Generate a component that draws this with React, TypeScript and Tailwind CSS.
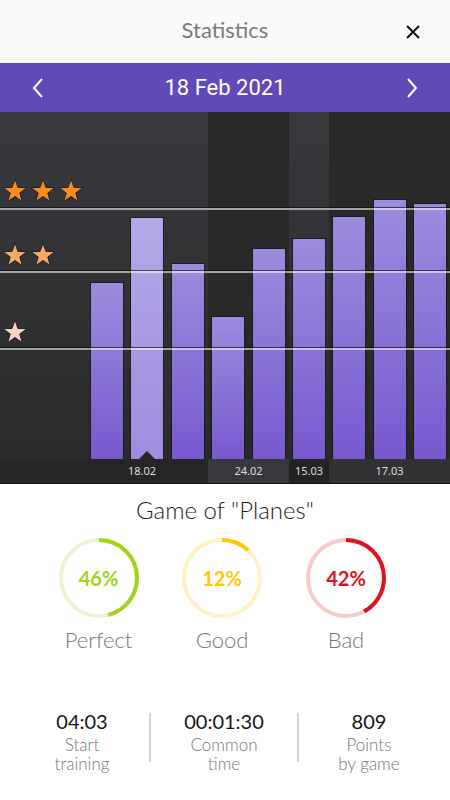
import React from 'react';

const bars = [177, 242, 196, 143, 211, 221, 243, 260, 256];
const selected = 1;

const bands = [
    { w: 208, light: true, strip: 'bg-[#252525]', label: '18.02', pad: 'pl-[128px]' },
    { w: 81, light: false, strip: 'bg-[#37383b]', label: '24.02', pad: 'justify-center' },
    { w: 40, light: true, strip: 'bg-[#242424]', label: '15.03', pad: 'justify-center' },
    { w: 121, light: false, strip: 'bg-[#323234]', label: '17.03', pad: 'justify-center' },
];

const Star = ({ fill }: { fill: string }) => (
    <svg width="26" height="25" viewBox="0 0 26 25">
        <polygon
            points="13,1 15.94,9.45 24.89,9.64 17.76,15.05 20.35,23.61 13,18.5 5.65,23.61 8.24,15.05 1.11,9.64 10.06,9.45"
            fill={fill}
            stroke="#1c232c"
            strokeWidth="1"
            strokeLinejoin="miter"
        />
    </svg>
);

const Ring = ({ pct, color, track }: { pct: number; color: string; track: string }) => {
    const c = 2 * Math.PI * 38;
    return (
        <svg width="80" height="80" viewBox="0 0 80 80" className="absolute inset-0">
            <circle cx="40" cy="40" r="38" fill="none" stroke={track} strokeWidth="4" />
            <circle
                cx="40"
                cy="40"
                r="38"
                fill="none"
                stroke={color}
                strokeWidth="4"
                strokeDasharray={`${(c * pct) / 100} ${c}`}
                transform="rotate(-90 40 40)"
            />
        </svg>
    );
};

const results = [
    { pct: 46, color: '#a2d41a', track: '#e9f4d0', text: 'text-[#a2d41a]', label: 'Perfect' },
    { pct: 12, color: '#ffc800', track: '#fff2c6', text: 'text-[#ffc800]', label: 'Good' },
    { pct: 42, color: '#dc1420', track: '#f6cbcb', text: 'text-[#dc1420]', label: 'Bad' },
];

const stats = [
    { value: '04:03', label: ['Start', 'training'] },
    { value: '00:01:30', label: ['Common', 'time'] },
    { value: '809', label: ['Points', 'by game'] },
];

export default function App() {
    return (
        <div className="w-[450px] h-[800px] bg-white overflow-hidden flex flex-col" style={{ fontFamily: 'Lato, "Open Sans", sans-serif' }}>
            <div className="h-[63px] bg-[#fafafa] flex items-center justify-center relative shrink-0">
                <span className="text-[22px] text-[#7a7a7a] -mt-[4px]">Statistics</span>
                <button className="absolute right-[30px] top-[25px] w-[14px] h-[14px]">
                    <svg width="14" height="14" viewBox="0 0 14 14">
                        <path d="M1 1 L13 13 M13 1 L1 13" stroke="#111" strokeWidth="2" />
                    </svg>
                </button>
            </div>

            <div className="h-[49px] bg-[#5f4ab8] flex items-center justify-between px-[32px] shrink-0">
                <svg width="12" height="20" viewBox="0 0 12 20">
                    <polyline points="10,1 2,10 10,19" fill="none" stroke="#fff" strokeWidth="2" />
                </svg>
                <span className="text-[22px] text-white" style={{ fontFamily: 'Roboto, "Liberation Sans", sans-serif' }}>
                    18 Feb 2021
                </span>
                <svg width="12" height="20" viewBox="0 0 12 20">
                    <polyline points="2,1 10,10 2,19" fill="none" stroke="#fff" strokeWidth="2" />
                </svg>
            </div>

            <div className="relative h-[372px] shrink-0 border-b border-[#111]">
                <div className="absolute inset-0 flex">
                    {bands.map((b, i) => (
                        <div key={i} className="flex flex-col h-full" style={{ width: b.w }}>
                            <div className={`flex-1 ${b.light ? 'bg-gradient-to-b from-[#38393d] to-[#2b2b2c]' : 'bg-[#292929]'}`} />
                            <div
                                className={`h-[24px] flex items-center ${b.strip} ${b.pad} text-[11px] text-[#dedede]`}
                                style={{ fontFamily: '"Noto Sans", sans-serif' }}
                            >
                                {b.label}
                            </div>
                        </div>
                    ))}
                </div>

                <div className="absolute left-0 right-0 top-0 h-[347px] flex items-end pl-[90px] gap-[6.4px]">
                    {bars.map((h, i) => (
                        <div
                            key={i}
                            className={`relative w-[34px] shrink-0 border border-[#1b1b1b] border-b-0 ${
                                i === selected
                                    ? 'bg-gradient-to-b from-[#b4a8e6] to-[#9f8cdf]'
                                    : 'bg-gradient-to-b from-[#9d8cdd] to-[#7858cf]'
                            }`}
                            style={{ height: h }}
                        >
                            {i === selected && (
                                <svg width="16" height="8" viewBox="0 0 16 8" className="absolute bottom-0 left-[8px]">
                                    <polygon points="0,8 8,0 16,8" fill="#262626" />
                                </svg>
                            )}
                        </div>
                    ))}
                </div>

                {[95, 158, 235].map((t) => (
                    <div key={t} className="absolute left-0 right-0" style={{ top: t }}>
                        <div className="h-[1px] bg-black/60" />
                        <div className="h-[1.5px] bg-white/55" />
                    </div>
                ))}

                <div className="absolute left-[2px] top-[66px] flex gap-[2px]">
                    <Star fill="#ff8a1c" />
                    <Star fill="#ff8a1c" />
                    <Star fill="#ff8a1c" />
                </div>
                <div className="absolute left-[2px] top-[130px] flex gap-[2px]">
                    <Star fill="#f6a963" />
                    <Star fill="#f6a963" />
                </div>
                <div className="absolute left-[2px] top-[207px] flex">
                    <Star fill="#fdd2bc" />
                </div>
            </div>

            <div className="flex flex-col items-center">
                <div className="mt-[11px] text-[24px] leading-[30px] font-light text-[#1e1e1e]">Game of "Planes"</div>
                <div className="mt-[13px] -ml-[5px] grid grid-cols-[123px_124px_124px]">
                    {results.map((r) => (
                        <div key={r.label} className="flex flex-col items-center">
                            <div className="relative w-[80px] h-[80px] flex items-center justify-center">
                                <Ring pct={r.pct} color={r.color} track={r.track} />
                                <span className={`relative text-[20px] font-bold ${r.text}`}>{r.pct}%</span>
                            </div>
                            <span className="mt-[8px] text-[22px] leading-[28px] font-light text-[#777]">{r.label}</span>
                        </div>
                    ))}
                </div>
            </div>

            <div className="mt-[55px] grid grid-cols-[134px_2px_146px_2px_140px] pl-[15px]">
                {stats.map((s, i) => (
                    <React.Fragment key={s.value}>
                        {i > 0 && <div className="w-[2px] h-[49px] mt-[4px] bg-[#d6d6d6]" />}
                        <div className="flex flex-col items-center">
                            <span className="text-[20px] leading-[24px] text-[#161616]">{s.value}</span>
                            <span className="mt-[2px] text-[17px] leading-[19px] font-light text-[#777] text-center">
                                {s.label[0]}
                                <br />
                                {s.label[1]}
                            </span>
                        </div>
                    </React.Fragment>
                ))}
            </div>
        </div>
    );
}
